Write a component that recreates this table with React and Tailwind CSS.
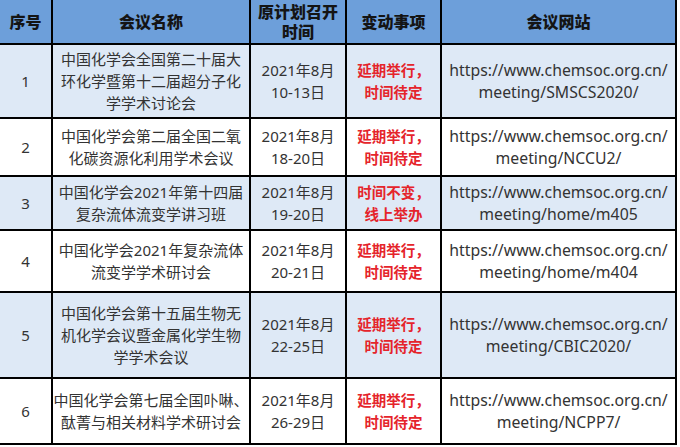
const rows = [
  {
    no: '1',
    name: ['中国化学会全国第二十届大', '环化学暨第十二届超分子化', '学学术讨论会'],
    date: ['2021年8月', '10-13日'],
    change: ['延期举行，', '时间待定'],
    url: ['https://www.chemsoc.org.cn/', 'meeting/SMSCS2020/'],
  },
  {
    no: '2',
    name: ['中国化学会第二届全国二氧', '化碳资源化利用学术会议'],
    date: ['2021年8月', '18-20日'],
    change: ['延期举行，', '时间待定'],
    url: ['https://www.chemsoc.org.cn/', 'meeting/NCCU2/'],
  },
  {
    no: '3',
    name: ['中国化学会2021年第十四届', '复杂流体流变学讲习班'],
    date: ['2021年8月', '19-20日'],
    change: ['时间不变，', '线上举办'],
    url: ['https://www.chemsoc.org.cn/', 'meeting/home/m405'],
  },
  {
    no: '4',
    name: ['中国化学会2021年复杂流体', '流变学学术研讨会'],
    date: ['2021年8月', '20-21日'],
    change: ['延期举行，', '时间待定'],
    url: ['https://www.chemsoc.org.cn/', 'meeting/home/m404'],
  },
  {
    no: '5',
    name: ['中国化学会第十五届生物无', '机化学会议暨金属化学生物', '学学术会议'],
    date: ['2021年8月', '22-25日'],
    change: ['延期举行，', '时间待定'],
    url: ['https://www.chemsoc.org.cn/', 'meeting/CBIC2020/'],
  },
  {
    no: '6',
    name: ['中国化学会第七届全国卟啉、', '酞菁与相关材料学术研讨会'],
    date: ['2021年8月', '26-29日'],
    change: ['延期举行，', '时间待定'],
    url: ['https://www.chemsoc.org.cn/', 'meeting/NCPP7/'],
  },
]

const font = { fontFamily: '"Noto Sans", "Noto Sans CJK SC", sans-serif' }

function Lines({ lines }) {
  return lines.map((l, i) => <div key={i}>{l}</div>)
}

export default function App() {
  return (
    <div className="w-[680px] h-[447px] bg-white" style={font}>
      <div className="grid grid-cols-[51px_196px_94px_93px_233px] grid-rows-[43px_72px_56px_52px_60px_84px_64px] gap-[2px] bg-black w-[677px] border-r-2 border-b-2 border-black">
        {/* Header */}
        {['序号', '会议名称', null, '变动事项', '会议网站'].map((h, i) => (
          <div key={i} className="bg-[#6d9fda] flex flex-col items-center justify-center text-center text-[16px] font-extrabold text-[#141414] leading-[20px]">
            {h ?? <Lines lines={['原计划召开', '时间']} />}
          </div>
        ))}

        {rows.map((r, idx) => {
          const bg = idx % 2 === 0 ? 'bg-[#dee9f6]' : 'bg-white'
          return [
            <div key={r.no + 'a'} className={`${bg} flex items-center justify-center text-[15px] text-[#333]`}>{r.no}</div>,
            <div key={r.no + 'b'} className={`${bg} flex flex-col items-center justify-center text-center text-[15px] leading-[22px] text-[#333]`}>
              <Lines lines={r.name} />
            </div>,
            <div key={r.no + 'c'} className={`${bg} flex flex-col items-center justify-center text-center text-[15px] leading-[22px] text-[#333]`}>
              <Lines lines={r.date} />
            </div>,
            <div key={r.no + 'd'} className={`${bg} flex flex-col items-center justify-center text-center text-[14.5px] leading-[22px] font-bold text-[#e5242b]`}>
              <Lines lines={r.change} />
            </div>,
            <div key={r.no + 'e'} className={`${bg} flex flex-col items-center justify-center text-center text-[15.8px] leading-[22px] text-[#333]`}>
              <Lines lines={r.url} />
            </div>,
          ]
        })}
      </div>
    </div>
  )
}
